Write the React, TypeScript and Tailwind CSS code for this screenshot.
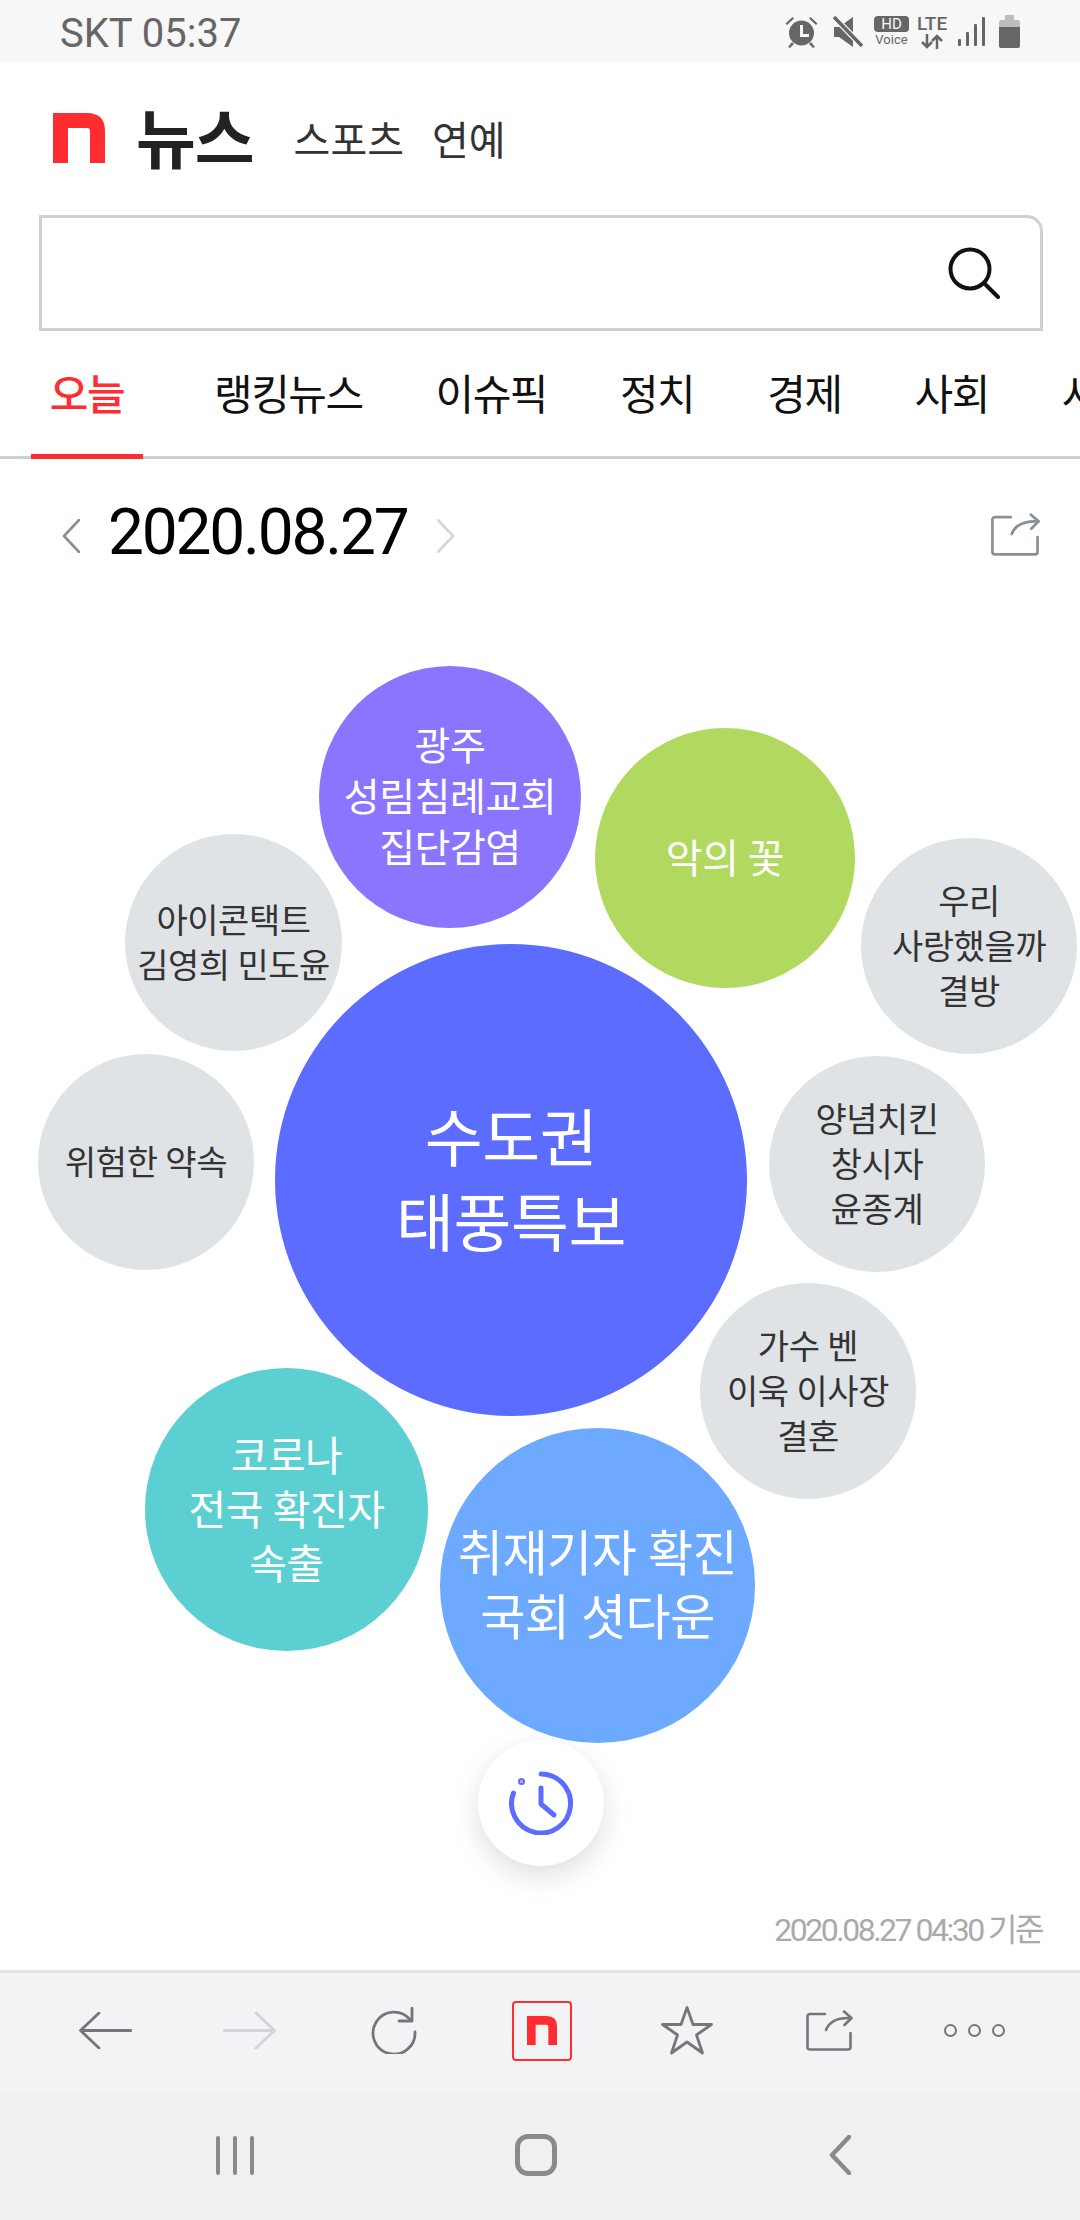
const TABS = ['오늘', '랭킹뉴스', '이슈픽', '정치', '경제', '사회', '사설'];

type Bubble = { lines: string[]; box: string; text: string };

const BUBBLES: Bubble[] = [
  { lines: ['광주', '성림침례교회', '집단감염'], box: 'left-[319px] top-[67px] h-[262px] w-[262px] bg-[#8b75ff]', text: 'text-[39px] leading-[51px] text-white' },
  { lines: ['악의 꽃'], box: 'left-[595px] top-[129px] h-[260px] w-[260px] bg-[#b1d95f]', text: 'text-[40px] leading-[51px] text-white' },
  { lines: ['아이콘택트', '김영희 민도윤'], box: 'left-[125px] top-[235px] h-[217px] w-[217px] bg-[#e0e3e6]', text: 'text-[34px] leading-[45px] text-[#333]' },
  { lines: ['우리', '사랑했을까', '결방'], box: 'left-[861px] top-[239px] h-[216px] w-[216px] bg-[#e0e3e6]', text: 'text-[34px] leading-[45px] text-[#333]' },
  { lines: ['위험한 약속'], box: 'left-[38px] top-[455px] h-[216px] w-[216px] bg-[#e0e3e6]', text: 'text-[34px] leading-[45px] text-[#333]' },
  { lines: ['수도권', '태풍특보'], box: 'left-[275px] top-[345px] h-[472px] w-[472px] bg-[#5c6cff]', text: 'text-[63px] leading-[85px] text-white' },
  { lines: ['양념치킨', '창시자', '윤종계'], box: 'left-[769px] top-[457px] h-[216px] w-[216px] bg-[#e0e3e6]', text: 'text-[34px] leading-[45px] text-[#333]' },
  { lines: ['가수 벤', '이욱 이사장', '결혼'], box: 'left-[700px] top-[684px] h-[216px] w-[216px] bg-[#e0e3e6]', text: 'text-[34px] leading-[45px] text-[#333]' },
  { lines: ['코로나', '전국 확진자', '속출'], box: 'left-[145px] top-[769px] h-[283px] w-[283px] bg-[#5bcfd2]', text: 'text-[41px] leading-[54px] text-white' },
  { lines: ['취재기자 확진', '국회 셧다운'], box: 'left-[440px] top-[829px] h-[315px] w-[315px] bg-[#6daaff]', text: 'text-[49px] leading-[64px] text-white' },
];

function NLogo({ className }: { className: string }) {
  return (
    <svg viewBox="0 0 52 50" className={className}>
      <path d="M0 0H34Q52 0 52 18V50H37V18Q37 15 34 15H15V50H0Z" fill="#ff2d32" />
    </svg>
  );
}

function ShareIcon({ className, color }: { className: string; color: string }) {
  return (
    <svg viewBox="0 0 47 41" fill="none" stroke={color} strokeWidth="2.6" strokeLinecap="round" strokeLinejoin="round" className={className}>
      <path d="M19 4H4Q1.5 4 1.5 6.5V37Q1.5 39.5 4 39.5H42Q44.5 39.5 44.5 37V23" />
      <path d="M20 20Q25 7 45 8" />
      <path d="M38 1.5L45.5 8L38.5 15" />
    </svg>
  );
}

function StatusBar() {
  return (
    <div className="flex h-[63px] shrink-0 items-center justify-between bg-[#f7f7f7] pl-[60px] pr-[60px] text-[#666]">
      <span className="pt-[4px] text-[40px] leading-none">SKT 05:37</span>
      <div className="flex items-center">
        <svg viewBox="0 0 33 32" className="h-[32px] w-[33px]" fill="#666">
          <circle cx="16.5" cy="17" r="12.5" />
          <path d="M2 9L9 2.5L7.5 1L.5 7.5ZM31 9L24 2.5L25.5 1L32.5 7.5ZM7 26L3 31L5 32L9 28ZM26 26L30 31L28 32L24 28Z" />
          <path d="M15 9H18V18H24V21H15Z" fill="#f7f7f7" />
        </svg>
        <svg viewBox="0 0 30 32" className="ml-[15px] h-[32px] w-[30px]" fill="#666">
          <path d="M1 11H6L20 1V31L6 21H1Z" />
          <path d="M1 1L29 30" stroke="#f7f7f7" strokeWidth="6" />
          <path d="M1 1L29 30" stroke="#666" strokeWidth="3.5" />
        </svg>
        <div className="ml-[11px] flex w-[35px] flex-col items-center">
          <span className="flex h-[16px] w-[35px] items-center justify-center rounded-[4px] bg-[#666] text-[15px] leading-none text-[#f7f7f7]">HD</span>
          <span className="mt-[1px] text-[13px] leading-[14px]">Voice</span>
        </div>
        <div className="ml-[8px] flex w-[30px] flex-col items-center">
          <span className="text-[19px] leading-[18px] font-medium">LTE</span>
          <svg viewBox="0 0 24 15" className="mt-[1px] h-[15px] w-[24px]" fill="none" stroke="#666" strokeWidth="2.5">
            <path d="M7 0V13M2 8L7 13L12 8" />
            <path d="M17 15V2M12 7L17 2L22 7" />
          </svg>
        </div>
        <div className="ml-[11px] flex h-[29px] items-end gap-[5px]">
          <div className="h-[7px] w-[3px] rounded-[1px] bg-[#666]" />
          <div className="h-[14px] w-[3px] rounded-[1px] bg-[#666]" />
          <div className="h-[22px] w-[3px] rounded-[1px] bg-[#666]" />
          <div className="h-[29px] w-[3px] rounded-[1px] bg-[#666]" />
        </div>
        <div className="ml-[14px] flex w-[21px] flex-col items-center">
          <div className="h-[5px] w-[9px] bg-[#bdbdbd]" />
          <div className="h-[7px] w-[21px] rounded-t-[2px] bg-[#bdbdbd]" />
          <div className="h-[21px] w-[21px] rounded-b-[2px] bg-[#666]" />
        </div>
      </div>
    </div>
  );
}

function Header() {
  return (
    <div className="flex h-[152px] shrink-0 items-start pl-[53px] pt-[50px]">
      <NLogo className="h-[50px] w-[52px]" />
      <span className="ml-[31px] mt-[3px] text-[65px] leading-[50px] font-bold tracking-[-1px] text-[#222]">뉴스</span>
      <span className="ml-[40px] mt-[5px] text-[40px] leading-[48px] text-[#333]">스포츠</span>
      <span className="ml-[28px] mt-[5px] text-[40px] leading-[48px] text-[#333]">연예</span>
    </div>
  );
}

function SearchBox() {
  return (
    <div className="ml-[39px] flex h-[116px] w-[1004px] shrink-0 items-center justify-end rounded-tr-[16px] border-[3px] border-[#d0d0d0] pr-[40px]">
      <svg viewBox="0 0 52 52" fill="none" stroke="#111" className="h-[52px] w-[52px]">
        <circle cx="22" cy="22" r="19.5" strokeWidth="4" />
        <path d="M36 36L50 50" strokeWidth="4" strokeLinecap="round" />
      </svg>
    </div>
  );
}

function Tabs() {
  return (
    <div className="relative flex h-[128px] shrink-0 overflow-hidden pl-[31px]">
      <div className="absolute inset-x-0 bottom-0 h-[3px] bg-[#d0d0d0]" />
      {TABS.map((tab, i) => (
        <div
          key={tab}
          className={
            i === 0
              ? 'relative flex h-[128px] w-[112px] shrink-0 items-center justify-center text-[42px] font-medium tracking-[-1.5px] text-[#ff2d32]'
              : i === 1
                ? 'ml-[71px] flex h-[128px] shrink-0 items-center text-[42px] tracking-[-1.5px] text-[#111]'
                : 'ml-[73px] flex h-[128px] shrink-0 items-center text-[42px] tracking-[-1.5px] text-[#111]'
          }
        >
          {tab}
          {i === 0 ? <div className="absolute bottom-0 left-0 h-[5px] w-full bg-[#ff2d32]" /> : null}
        </div>
      ))}
    </div>
  );
}

function DateRow() {
  return (
    <div className="flex h-[140px] shrink-0 items-start pl-[62px] pr-[39px] pt-[54px]">
      <svg viewBox="0 0 18 34" fill="none" stroke="#8a8f99" strokeWidth="2.6" strokeLinecap="round" strokeLinejoin="round" className="mt-[6px] h-[34px] w-[18px]">
        <path d="M17 1L2 17L17 33" />
      </svg>
      <span className="ml-[28px] -mt-[3px] text-[64px] leading-[46px] tracking-[-2.2px] text-black">2020.08.27</span>
      <svg viewBox="0 0 18 34" fill="none" stroke="#d4d6dc" strokeWidth="2.6" strokeLinecap="round" strokeLinejoin="round" className="ml-[29px] mt-[6px] h-[34px] w-[18px]">
        <path d="M1 1L16 17L1 33" />
      </svg>
      <ShareIcon className="ml-auto h-[43px] w-[51px]" color="#8a8f99" />
    </div>
  );
}

function BubbleCanvas() {
  return (
    <div className="relative flex-1">
      {BUBBLES.map((bubble) => (
        <div key={bubble.lines[0]} className={`absolute flex flex-col items-center justify-center rounded-full pt-[3px] tracking-[-0.5px] whitespace-nowrap ${bubble.box} ${bubble.text}`}>
          {bubble.lines.map((line) => (
            <span key={line}>{line}</span>
          ))}
        </div>
      ))}
      <div className="absolute left-[478px] top-[1141px] flex h-[126px] w-[126px] items-center justify-center rounded-full bg-white shadow-[0_10px_28px_rgba(0,0,0,0.13)]">
        <svg viewBox="0 0 64 64" fill="none" stroke="#5b6cff" strokeWidth="5" strokeLinecap="round" strokeLinejoin="round" className="h-[64px] w-[64px]">
          <path d="M32 3A29.5 29.5 0 1 1 4.5 22" />
          <circle cx="12.5" cy="10.5" r="1" fill="#5b6cff" />
          <path d="M32 17V33L45 44" />
        </svg>
      </div>
      <span className="absolute bottom-[25px] right-[38px] text-[32px] leading-[30px] tracking-[-2.5px] text-[#aaa]">2020.08.27 04:30 기준</span>
    </div>
  );
}

function Toolbar() {
  return (
    <div className="flex h-[123px] shrink-0 items-center border-t-[3px] border-[#e1e2e8] bg-[#f2f3f5] pb-[5px] pl-[79px]">
      <svg viewBox="0 0 53 37" fill="none" stroke="#75767c" strokeWidth="2.8" strokeLinecap="round" strokeLinejoin="round" className="h-[37px] w-[53px]">
        <path d="M52 18.5H1.5M20 1L1.5 18.5L20 36" />
      </svg>
      <svg viewBox="0 0 53 37" fill="none" stroke="#d2d3dc" strokeWidth="2.8" strokeLinecap="round" strokeLinejoin="round" className="ml-[91px] h-[37px] w-[53px]">
        <path d="M1 18.5H51.5M33 1L51.5 18.5L33 36" />
      </svg>
      <svg viewBox="0 0 46 47" fill="none" stroke="#75767c" strokeWidth="2.8" strokeLinecap="round" strokeLinejoin="round" className="ml-[95px] h-[47px] w-[46px]">
        <path d="M44 25A21 21 0 1 1 39 12.5" />
        <path d="M41 1V14H28" />
      </svg>
      <div className="ml-[95px] flex h-[60px] w-[60px] items-center justify-center rounded-[4px] border-[2px] border-[#ff2d32]">
        <NLogo className="h-[29px] w-[30px]" />
      </div>
      <svg viewBox="0 0 52 49" fill="none" stroke="#75767c" strokeWidth="2.8" strokeLinecap="round" strokeLinejoin="round" className="ml-[89px] h-[49px] w-[52px]">
        <path d="M26 1.5L32 18.5H50.5L35.5 29L41.5 47L26 36L10.5 47L16.5 29L1.5 18.5H20Z" />
      </svg>
      <ShareIcon className="ml-[93px] h-[41px] w-[47px]" color="#75767c" />
      <div className="ml-[91px] flex items-center gap-[11px]">
        <div className="h-[13px] w-[13px] rounded-full border-[2.5px] border-[#75767c]" />
        <div className="h-[13px] w-[13px] rounded-full border-[2.5px] border-[#75767c]" />
        <div className="h-[13px] w-[13px] rounded-full border-[2.5px] border-[#75767c]" />
      </div>
    </div>
  );
}

function NavBar() {
  return (
    <div className="flex h-[127px] shrink-0 items-center bg-[#f0f0f1] pb-[3px] pl-[216px]">
      <div className="flex h-[39px] w-[38px] justify-between">
        <div className="w-[4px] rounded-full bg-[#8a8a8a]" />
        <div className="w-[4px] rounded-full bg-[#8a8a8a]" />
        <div className="w-[4px] rounded-full bg-[#8a8a8a]" />
      </div>
      <div className="ml-[261px] h-[42px] w-[42px] rounded-[13px] border-[5px] border-[#8a8a8a]" />
      <svg viewBox="0 0 22 40" fill="none" stroke="#8a8a8a" strokeWidth="4.5" strokeLinecap="round" strokeLinejoin="round" className="ml-[272px] h-[40px] w-[22px]">
        <path d="M20 2L3 20L20 38" />
      </svg>
    </div>
  );
}

export default function App() {
  return (
    <div className="flex h-[2220px] w-[1080px] flex-col overflow-hidden bg-white [font-family:Roboto,'Noto_Sans_CJK_KR',sans-serif]">
      <StatusBar />
      <Header />
      <SearchBox />
      <Tabs />
      <DateRow />
      <BubbleCanvas />
      <Toolbar />
      <NavBar />
    </div>
  );
}
